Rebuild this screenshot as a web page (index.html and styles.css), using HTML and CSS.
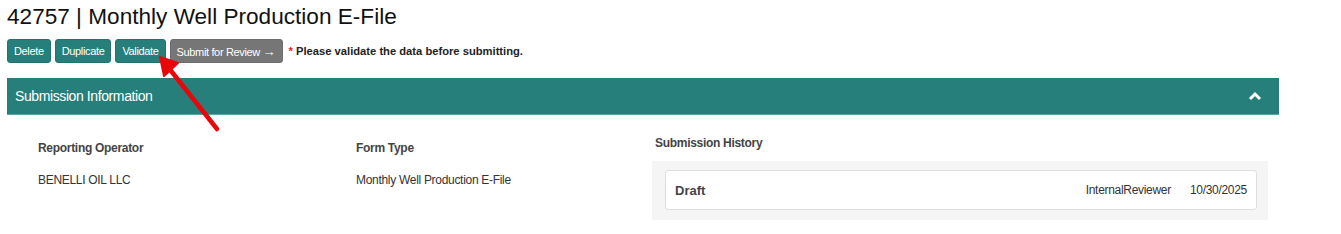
FILE: index.html
```html
<!DOCTYPE html>
<html lang="en">
<head>
<meta charset="utf-8">
<title>42757 | Monthly Well Production E-File</title>
<link rel="stylesheet" href="styles.css">
</head>
<body>
<div class="page">
  <h1 class="title">42757 | Monthly Well Production E-File</h1>
  <div class="actions">
    <button class="btn btn-teal">Delete</button>
    <button class="btn btn-teal">Duplicate</button>
    <button class="btn btn-teal">Validate</button>
    <button class="btn btn-grey">Submit for Review <span class="arrow">&rarr;</span></button>
    <span class="note"><span class="req">*</span> Please validate the data before submitting.</span>
  </div>
  <section class="panel">
    <div class="panel-head">
      <span class="panel-title">Submission Information</span>
      <svg class="chev" width="14" height="10" viewBox="0 0 14 10"><path d="M2 8 L7 3 L12 8" fill="none" stroke="#fff" stroke-width="3" stroke-linecap="butt"/></svg>
    </div>
    <div class="panel-body">
      <div class="field">
        <div class="label">Reporting Operator</div>
        <div class="value">BENELLI OIL LLC</div>
      </div>
      <div class="field">
        <div class="label">Form Type</div>
        <div class="value">Monthly Well Production E-File</div>
      </div>
      <div class="history">
        <div class="label hist-label">Submission History</div>
        <div class="hist-box">
          <div class="hist-card">
            <span class="status">Draft</span>
            <span class="who">InternalReviewer</span>
            <span class="date">10/30/2025</span>
          </div>
        </div>
      </div>
    </div>
  </section>
</div>
<svg class="pointer" width="80" height="90" viewBox="0 0 80 90">
  <line x1="66" y1="78" x2="13" y2="11" stroke="#e8060a" stroke-width="4.5" stroke-linecap="round"/>
  <path d="M9 6 L27 12 L13 25 Z" fill="#e8060a" stroke="#e8060a" stroke-width="2" stroke-linejoin="round"/>
</svg>
</body>
</html>
```
FILE: styles.css
```css
html, body {
  margin: 0;
  padding: 0;
  background: #fff;
}
body {
  font-family: "Liberation Sans", Arial, sans-serif;
  color: #222;
  position: relative;
}
.page {
  padding: 2px 62px 0 7px;
}
.title {
  margin: 0;
  font-size: 22.6px;
  font-weight: normal;
  line-height: 30px;
  color: #111;
}
.actions {
  display: flex;
  align-items: center;
  gap: 4px;
  margin-top: 7px;
  height: 24px;
}
.btn {
  height: 24px;
  border: 1px solid transparent;
  border-radius: 3px;
  color: #fff;
  font-family: "Liberation Sans", Arial, sans-serif;
  font-size: 11px;
  letter-spacing: -0.35px;
  padding: 0 6px;
  margin: 0;
  cursor: pointer;
}
.arrow {
  font-size: 13px;
  letter-spacing: 0;
}
.btn-teal {
  background: #267f7a;
  border-color: #23736e;
}
.btn-grey {
  background: #767676;
  border-color: #6c6c6c;
}
.note {
  margin-left: 2px;
  font-size: 11.2px;
  font-weight: bold;
  color: #222;
}
.req {
  color: #d9232a;
}
.panel {
  margin-top: 15px;
}
.panel-head {
  height: 36px;
  background: #267f7a;
  border-bottom: 1px solid #5aa7a2;
  display: flex;
  align-items: center;
  justify-content: space-between;
  padding: 0 17px 0 8px;
}
.panel-title {
  color: #fff;
  font-size: 14px;
  letter-spacing: -0.4px;
}
.chev {
  display: block;
}
.panel-body {
  display: grid;
  grid-template-columns: 318px 296px 1fr;
  padding: 0 11px 0 31px;
}
.field {
  padding-top: 26px;
}
.label {
  font-size: 12px;
  font-weight: bold;
  color: #444;
  line-height: 14px;
  letter-spacing: -0.3px;
}
.value {
  margin-top: 18px;
  font-size: 12px;
  color: #333;
  line-height: 14px;
  letter-spacing: -0.3px;
}
.history {
  padding-top: 21px;
}
.hist-label {
  padding-left: 3px;
}
.hist-box {
  margin-top: 11px;
  background: #f5f5f5;
  padding: 9px 11px 10px 13px;
}
.hist-card {
  background: #fff;
  border: 1px solid #dedede;
  border-radius: 3px;
  height: 38px;
  display: flex;
  align-items: center;
  padding: 0 9px 0 9px;
}
.status {
  font-size: 13px;
  font-weight: bold;
  color: #444;
  flex: 1;
}
.who {
  font-size: 12px;
  color: #333;
  letter-spacing: -0.3px;
}
.date {
  font-size: 12px;
  color: #333;
  margin-left: 19px;
  letter-spacing: -0.3px;
}
.pointer {
  position: absolute;
  left: 151px;
  top: 51px;
}
```
